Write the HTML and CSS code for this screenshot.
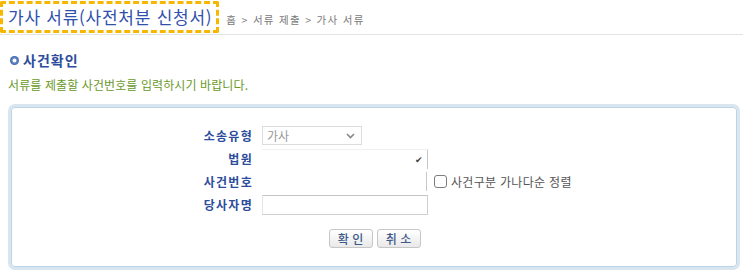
FILE: index.html
```html
<!DOCTYPE html>
<html lang="ko">
<head>
<meta charset="utf-8">
<link rel="stylesheet" href="styles.css">
</head>
<body>
<div class="header">
  <h1 class="title">가사 서류(사전처분 신청서)</h1>
  <div class="crumb">홈 &gt; 서류 제출 &gt; 가사 서류</div>
</div>
<h2 class="sec-title"><span class="bullet"></span>사건확인</h2>
<p class="desc">서류를 제출할 사건번호를 입력하시기 바랍니다.</p>
<div class="box">
  <div class="form">
    <label class="lbl">소송유형</label>
    <div class="ctl">
      <div class="select"><span>가사</span>
        <svg class="chev" width="9" height="6" viewBox="0 0 9 6"><path d="M1 1l3.5 3.5L8 1" fill="none" stroke="#888" stroke-width="1.6"/></svg>
      </div>
    </div>
    <label class="lbl">법원</label>
    <div class="ctl">
      <div class="court"><span class="tick">✔</span></div>
    </div>
    <label class="lbl">사건번호</label>
    <div class="ctl">
      <div class="caseno"></div>
      <span class="chk"></span>
      <span class="chk-label">사건구분 가나다순 정렬</span>
    </div>
    <label class="lbl">당사자명</label>
    <div class="ctl">
      <div class="input"></div>
    </div>
  </div>
  <div class="buttons">
    <button class="btn">확 인</button>
    <button class="btn">취 소</button>
  </div>
</div>
</body>
</html>
```
FILE: styles.css
```css
* { box-sizing: border-box; }
body {
  margin: 0;
  font-family: "Noto Sans CJK KR", "Noto Sans", sans-serif;
  background: #fff;
  color: #333;
}
.header {
  display: flex;
  align-items: flex-end;
  height: 35px;
  border-bottom: 1px solid #e4e4e4;
}
.title {
  margin: 1px 0 0 0;
  align-self: flex-start;
  border: 3px dashed #f7b700;
  border-radius: 2px;
  padding: 0 4px 0 5px;
  font-size: 17px;
  line-height: 26px;
  font-weight: normal;
  color: #2f50ac;
  letter-spacing: 0.75px;
}
.crumb {
  margin-left: 7px;
  padding-bottom: 7px;
  font-size: 10.5px;
  line-height: 14px;
  letter-spacing: 1.3px;
  color: #7a7a7a;
}
.sec-title {
  margin: 17px 0 0 0;
  padding-left: 10px;
  display: flex;
  align-items: center;
  font-size: 14px;
  line-height: 16px;
  font-weight: bold;
  letter-spacing: 1px;
  color: #2e4d9c;
}
.bullet {
  width: 9px;
  height: 9px;
  border-radius: 50%;
  background: radial-gradient(circle, #fff 0 1.6px, #6e8fc7 2.2px, #3c62ac 4.5px);
  margin-right: 4px;
}
.desc {
  margin: 9px 0 0 0;
  padding-left: 8px;
  font-size: 12px;
  line-height: 16px;
  letter-spacing: 0.1px;
  color: #6a9a2a;
}
.box {
  margin: 11px 3px 0 8px;
  height: 166px;
  border: 3px solid #d9e5ef;
  border-radius: 7px;
  box-shadow: inset 0 0 0 1px #bcd4e8;
  padding: 19px 0 0 0;
}
.form {
  display: grid;
  grid-template-columns: 241px 1fr;
  column-gap: 10px;
  row-gap: 4px;
}
.lbl {
  text-align: right;
  font-size: 12px;
  line-height: 19px;
  font-weight: bold;
  letter-spacing: 1.3px;
  margin-right: -1px;
  color: #2c4c9c;
  height: 19px;
}
.ctl {
  display: flex;
  align-items: center;
  height: 19px;
}
.select {
  width: 100px;
  height: 19px;
  border: 1px solid #dcdcdc;
  display: flex;
  align-items: center;
  justify-content: space-between;
  padding: 0 6px 0 4px;
  font-size: 12px;
  color: #999;
}
.court {
  width: 166px;
  height: 20px;
  border-right: 1px solid #c9c9c9;
  border-top: 1px solid #f0f0f0;
  display: flex;
  justify-content: flex-end;
  align-items: center;
  padding-right: 4px;
}
.tick {
  font-size: 9px;
  color: #444;
}
.caseno {
  width: 165px;
  height: 19px;
  border-right: 1px solid #c9c9c9;
}
.chk {
  width: 13px;
  height: 13px;
  margin-left: 7px;
  border: 1px solid #7d7d7d;
  border-radius: 3px;
  background: #fff;
}
.chk-label {
  margin-left: 4px;
  font-size: 12px;
  letter-spacing: 0.3px;
  color: #555;
}
.input {
  width: 166px;
  height: 20px;
  border: 1px solid #cfcfcf;
  border-top-color: #c4c4c4;
  border-left-color: #e4e4e4;
  margin-top: 1px;
}
.buttons {
  display: flex;
  justify-content: center;
  gap: 4px;
  margin-top: 15px;
  padding-left: 1px;
}
.btn {
  width: 44px;
  height: 19px;
  padding: 0;
  font-family: inherit;
  font-size: 12px;
  line-height: 17px;
  font-weight: 500;
  color: #3e5a8a;
  background: linear-gradient(#ffffff, #e9e9e9);
  border: 1px solid #c6c6c6;
  border-radius: 3px;
}
```
